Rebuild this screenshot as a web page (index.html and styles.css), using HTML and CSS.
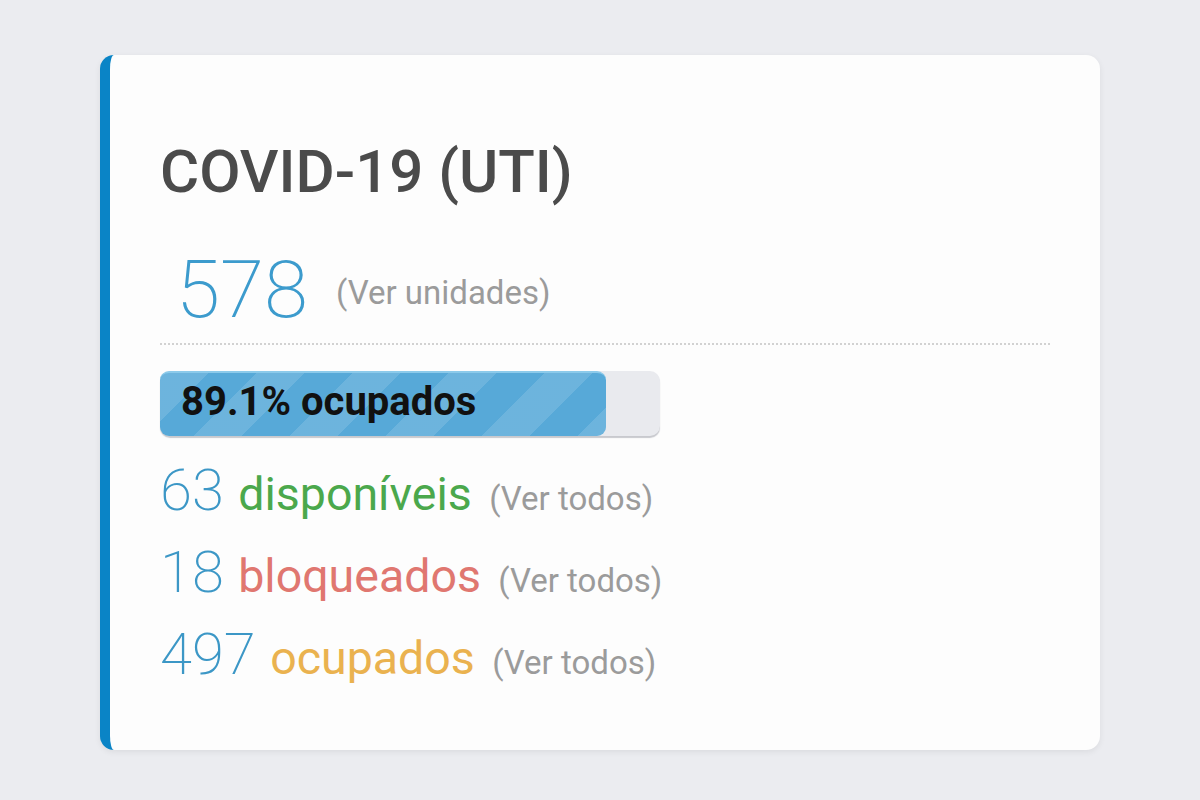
FILE: index.html
```html
<!DOCTYPE html>
<html lang="pt-BR">
<head>
  <meta charset="UTF-8" />
  <meta name="viewport" content="width=device-width, initial-scale=1.0"/>
  <title>Leitos - COVID-19 (UTI)</title>
  <link rel="stylesheet" href="styles.css">
</head>
<body>

  <div class="leitos-card">
    <h2>COVID-19 (UTI)</h2>

    <div class="total-row">
      <span class="total">578</span>
      <a href="#" class="ver-link">(Ver unidades)</a>
    </div>

    <div class="progress">
      <div class="progress-bar" style="width: 89.1%">89.1% ocupados</div>
    </div>

    <div class="status-row">
      <span class="num">63</span> <span class="label disponiveis">disponíveis</span> <a href="#" class="ver-link">(Ver todos)</a>
    </div>
    <div class="status-row">
      <span class="num">18</span> <span class="label bloqueados">bloqueados</span> <a href="#" class="ver-link">(Ver todos)</a>
    </div>
    <div class="status-row">
      <span class="num">497</span> <span class="label ocupados">ocupados</span> <a href="#" class="ver-link">(Ver todos)</a>
    </div>
  </div>

</body>
</html>
```

FILE: styles.css
```css
body {
  font-family: Roboto, 'Noto Sans', sans-serif;
  margin: 0;
  padding: 55px 100px;
  background: #ebecf0;
}

.leitos-card {
  background: #fdfdfd;
  border-left: 10px solid #0a84c6;
  border-radius: 14px;
  padding: 82px 50px 55px 50px;
  box-shadow: 0 2px 6px rgba(0, 0, 0, 0.07);
}

h2 {
  margin: 0;
  font-size: 60px;
  line-height: 70px;
  font-weight: 500;
  color: #4b4b4b;
}

.total-row {
  display: flex;
  align-items: center;
  margin-top: 43px;
  padding-left: 16px;
  padding-bottom: 13px;
  border-bottom: 2px dotted #d2d2d2;
}

.total {
  font-size: 80px;
  line-height: 80px;
  font-weight: 200;
  color: #3c9bcd;
}

.ver-link {
  color: #9b9b9b;
  font-size: 33px;
  line-height: 1;
  text-decoration: none;
}

.total-row .ver-link {
  margin-left: 28px;
  margin-top: 5px;
}

.progress {
  width: 500px;
  height: 65px;
  margin-top: 26px;
  background: #e9eaee;
  border-radius: 10px;
  box-shadow: 0 2px 1px #c8c9ce;
}

.progress-bar {
  height: 100%;
  box-sizing: border-box;
  padding-left: 21px;
  padding-bottom: 6px;
  display: flex;
  align-items: center;
  border-radius: 9px;
  border-top: 2px solid #8ccaea;
  background-color: #57a9d8;
  background-image: repeating-linear-gradient(135deg, rgba(255, 255, 255, 0.13) 0 34px, transparent 34px 68px);
  color: #111;
  font-size: 40px;
  font-weight: 700;
  white-space: nowrap;
}

.status-row {
  font-size: 58px;
  line-height: 82px;
  white-space: nowrap;
}

.progress + .status-row {
  margin-top: 13px;
}

.num {
  font-weight: 200;
  color: #3c97c6;
  line-height: 1;
}

.label {
  font-size: 46.5px;
  line-height: 1;
  margin-right: 3px;
}

.disponiveis { color: #4ba84c; }
.bloqueados { color: #e07770; }
.ocupados { color: #eab24f; }
```
